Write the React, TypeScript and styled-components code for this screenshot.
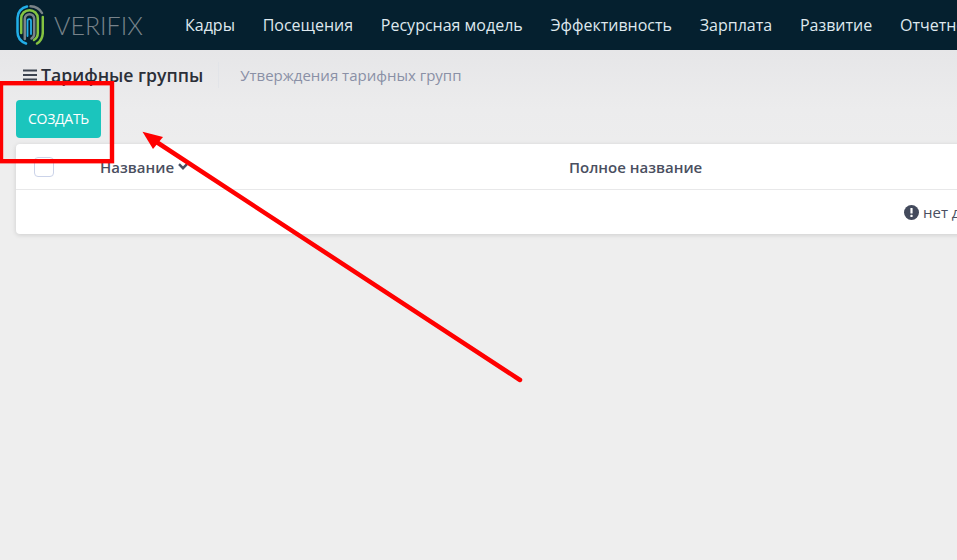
import React from "react";
import styled, { createGlobalStyle } from "styled-components";

const Global = createGlobalStyle`
  html, body { margin: 0; padding: 0; height: 100%; background: #eeeeee; overflow: hidden; }
  #root { height: 100%; }
  * { box-sizing: border-box; }
`;

const Page = styled.div`
  position: relative;
  width: 957px;
  height: 560px;
  overflow: hidden;
  font-family: "Open Sans", "Noto Sans", sans-serif;
  background: #eeeeee;
`;

const TopBar = styled.header`
  display: flex;
  align-items: center;
  height: 50px;
  background: #05202f;
  padding-left: 16px;
  white-space: nowrap;
`;

const Brand = styled.div`
  display: flex;
  align-items: center;
  width: 169px;
  flex: none;
`;

const BrandName = styled.span`
  font-family: "Lato", sans-serif;
  font-weight: 300;
  font-size: 25px;
  color: #78838a;
  margin-left: 10px;
  line-height: 1;
`;

const Nav = styled.nav`
  display: flex;
  gap: 27.75px;
`;

const NavItem = styled.a`
  font-size: 16px;
  color: #dfe8ee;
  line-height: 20px;
`;

const Content = styled.main`
  padding: 0 0 0 16px;
  background: linear-gradient(#e6e6e8 0, #ececed 60px, #eeeeee 120px);
`;

const Tabs = styled.div`
  display: flex;
  align-items: center;
  height: 50px;
  padding-left: 7px;
  white-space: nowrap;
`;

const MenuIcon = styled.svg`
  width: 14px;
  height: 12px;
  margin-right: 4px;
  color: #3d4450;
`;

const PageTitle = styled.h1`
  margin: 0;
  font-size: 17.65px;
  font-weight: 600;
  color: #2b2f38;
  line-height: 26px;
  padding-right: 15px;
  border-right: 1px solid #e2e4e8;
`;

const TabLink = styled.a`
  margin-left: 21px;
  font-size: 15px;
  color: #8a90a6;
  line-height: 20px;
`;

const CreateButton = styled.button`
  display: block;
  width: 85px;
  height: 38px;
  border: 0;
  border-radius: 4px;
  background: #1bc5bd;
  color: #ffffff;
  font-family: inherit;
  font-size: 14px;
  letter-spacing: -0.3px;
  padding: 0 0 2px;
`;

const Card = styled.section`
  width: 1300px;
  margin-top: 6px;
  background: #ffffff;
  border-radius: 4px;
  box-shadow: 0 1px 5px rgba(0, 0, 0, 0.14);
`;

const HeadRow = styled.div`
  display: grid;
  grid-template-columns: 84px 469px 1fr;
  align-items: center;
  height: 46px;
  border-bottom: 1px solid #e8e8e9;
`;

const CheckCell = styled.div`
  padding-left: 18px;
`;

const Checkbox = styled.span`
  display: block;
  width: 20px;
  height: 20px;
  border: 1px solid #cbd3e9;
  border-radius: 4px;
  background: #fff;
`;

const HeadCell = styled.div`
  display: flex;
  align-items: center;
  gap: 4px;
  font-size: 15px;
  font-weight: 600;
  color: #4a4f60;
`;

const EmptyRow = styled.div`
  display: flex;
  align-items: center;
  height: 44px;
  padding-left: 888px;
  font-size: 15px;
  color: #4a4f60;
  white-space: nowrap;
`;

const InfoIcon = styled.svg`
  width: 15px;
  height: 15px;
  margin-right: 4px;
  flex: none;
`;

const Annotation = styled.svg`
  position: absolute;
  left: 0;
  top: 0;
  width: 957px;
  height: 560px;
  pointer-events: none;
`;

const navItems = ["Кадры", "Посещения", "Ресурсная модель", "Эффективность", "Зарплата", "Развитие", "Отчетность"];

export default function App() {
  return (
    <Page>
      <Global />
      <TopBar>
        <Brand>
          <svg width="28" height="40" viewBox="0 0 28 40" fill="none" strokeWidth="2.5" strokeLinecap="round">
            <path d="M10 38.5 C4.5 36.5 1.5 32 1.5 27 V13 C1.5 7 5.5 2.5 11 1.5" stroke="#22aee8" />
            <path d="M14.5 1.3 C20 1.5 24 4.5 26 8" stroke="#7a8388" />
            <path d="M26.8 12 V27 C26.8 32 25 36 21 38.5" stroke="#84c341" />
            <path d="M5.2 28 V13.5 C5.2 8.5 9 5.3 13.5 5.3 C18 5.3 21.8 8.5 21.8 13.5 V28 C21.8 31 20.5 33.5 18 35" stroke="#84c341" />
            <path d="M8.8 34 V14 C8.8 11 11 9.2 13.5 9.2 C16 9.2 18.2 11 18.2 14 V29 C18.2 31 17 32.5 15.5 33.5" stroke="#7a8388" />
            <path d="M11.5 31 V16 C11.5 13.6 15 13.6 15 16 V29" stroke="#22aee8" strokeWidth="1.8" />
          </svg>
          <BrandName>VERIFIX</BrandName>
        </Brand>
        <Nav>
          {navItems.map((n) => (
            <NavItem key={n}>{n}</NavItem>
          ))}
        </Nav>
      </TopBar>
      <Content>
        <Tabs>
          <MenuIcon viewBox="0 0 14 12">
            <path d="M0 1.5h14M0 6h14M0 10.5h14" stroke="currentColor" strokeWidth="1.8" />
          </MenuIcon>
          <PageTitle>Тарифные группы</PageTitle>
          <TabLink>Утверждения тарифных групп</TabLink>
        </Tabs>
        <CreateButton>СОЗДАТЬ</CreateButton>
        <Card>
          <HeadRow>
            <CheckCell>
              <Checkbox />
            </CheckCell>
            <HeadCell>
              Название
              <svg width="10" height="7" viewBox="0 0 10 7" fill="none">
                <path d="M1 1.2 5 5.2 9 1.2" stroke="#4a4f60" strokeWidth="2.4" />
              </svg>
            </HeadCell>
            <HeadCell>Полное название</HeadCell>
          </HeadRow>
          <EmptyRow>
            <InfoIcon viewBox="0 0 15 15">
              <circle cx="7.5" cy="7.5" r="7.5" fill="#434a5c" />
              <rect x="6.4" y="3" width="2.2" height="5.6" rx="0.6" fill="#fff" />
              <rect x="6.4" y="9.8" width="2.2" height="2.2" rx="0.6" fill="#fff" />
            </InfoIcon>
            нет данных
          </EmptyRow>
        </Card>
      </Content>
      <Annotation viewBox="0 0 957 560">
        <rect x="1" y="83.2" width="111" height="78" fill="none" stroke="#ff0000" strokeWidth="4.4" />
        <path d="M520 380 L155 141" stroke="#ff0000" strokeWidth="4.5" strokeLinecap="round" />
        <path d="M142.5 131.7 L163 137 L153 149 Z" fill="#ff0000" />
      </Annotation>
    </Page>
  );
}
